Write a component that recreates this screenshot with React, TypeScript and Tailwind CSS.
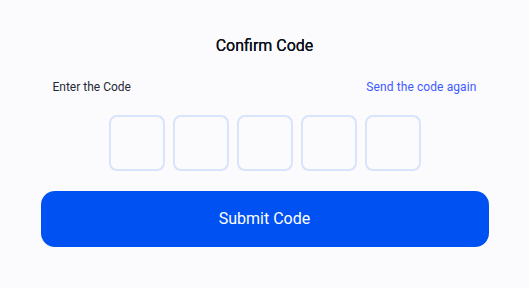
export default function App() {
  return (
    <div className="min-h-screen w-full bg-[#fbfbfe] font-['Roboto',sans-serif]">
      <div className="mx-auto flex w-[448px] flex-col pt-[34px]">
        <h1 className="text-center text-[16px] font-normal leading-6 text-[#0b0f19] [text-shadow:0_0_0.3px_#0b0f19]">
          Confirm Code
        </h1>

        <div className="mt-[21px] flex items-center justify-between px-3 text-[12px] leading-4">
          <span className="text-[#1f2937]">Enter the Code</span>
          <button className="text-[#3d5afe] tracking-[0.1px]">Send the code again</button>
        </div>

        <div className="mt-[20px] flex justify-center gap-[8px]">
          {[0, 1, 2, 3, 4].map((i) => (
            <input
              key={i}
              maxLength={1}
              className="h-[56px] w-[56px] rounded-[8px] border-2 border-[#d9e3fb] bg-transparent text-center text-xl outline-none"
            />
          ))}
        </div>

        <button className="mt-[20px] h-[56px] w-full rounded-[14px] bg-[#0051f2] text-[16px] text-white">
          Submit Code
        </button>
      </div>
    </div>
  );
}
